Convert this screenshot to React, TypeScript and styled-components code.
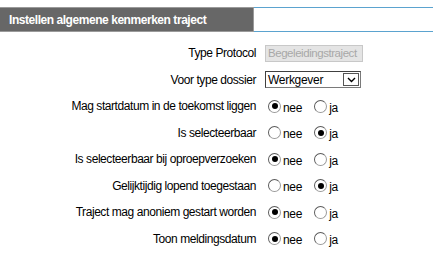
import React from 'react'
import styled, { createGlobalStyle } from 'styled-components'

const GlobalStyle = createGlobalStyle`
    body {
        margin: 0;
        background: #fff;
        font-family: "Liberation Sans", Arial, sans-serif;
        font-size: 12px;
        letter-spacing: -0.3px;
        color: #000;
    }
`

const Page = styled.div`
    padding-top: 7px;
`

const HeaderBar = styled.div`
    display: flex;
    height: 25px;
`

const HeaderTitle = styled.div`
    width: 254px;
    box-sizing: border-box;
    background: #676767;
    border: 1px solid #9a9a9a;
    border-left: none;
    color: #fff;
    font-weight: bold;
    font-size: 12px;
    letter-spacing: -0.45px;
    display: flex;
    align-items: center;
    padding-left: 9px;
`

const HeaderRest = styled.div`
    flex: 1;
    border-top: 1px solid #5ba3cf;
    border-bottom: 1px solid #5ba3cf;
`

const Form = styled.div`
    display: grid;
    grid-template-columns: 256px auto;
    column-gap: 9px;
    grid-auto-rows: 26.5px;
    align-items: center;
    margin-top: 8px;
`

const Label = styled.div`
    text-align: right;
    white-space: nowrap;
    letter-spacing: -0.43px;
`

const Field = styled.div`
    display: flex;
    align-items: center;
`

const ReadOnlyInput = styled.div`
    width: 98px;
    height: 17px;
    box-sizing: border-box;
    background: #e4e4e4;
    border: 1px solid #c8c8c8;
    color: #a8a8a8;
    padding-left: 2px;
    line-height: 15px;
    font-size: 11.5px;
    letter-spacing: -0.45px;
    white-space: nowrap;
    overflow: hidden;
`

const Select = styled.div`
    width: 96px;
    height: 17px;
    box-sizing: border-box;
    border: 1px solid #7a7a7a;
    border-top-color: #404040;
    border-left-color: #404040;
    display: flex;
    align-items: center;
    padding-left: 2px;
`

const SelectText = styled.span`
    flex: 1;
`

const SelectButton = styled.div`
    width: 16px;
    height: 13px;
    margin-right: 1px;
    border: 1px solid #555;
    box-sizing: border-box;
    display: flex;
    align-items: center;
    justify-content: center;
`

const RadioGroup = styled.div`
    display: flex;
    align-items: center;
`

const RadioOption = styled.label`
    display: flex;
    align-items: center;
    margin-right: 9px;
`

const RadioCircle = styled.span<{ $checked: boolean }>`
    width: 13px;
    height: 13px;
    box-sizing: border-box;
    border-radius: 50%;
    border: 1px solid #5a5a5a;
    border-right-color: #9a9a9a;
    border-bottom-color: #9a9a9a;
    background: #fff;
    margin: 0 2px 0 3px;
    display: flex;
    align-items: center;
    justify-content: center;
    &::after {
        content: '';
        display: ${p => (p.$checked ? 'block' : 'none')};
        width: 6px;
        height: 6px;
        border-radius: 50%;
        background: #000;
    }
`

const RadioText = styled.span`
    padding-top: 3px;
`

const questions: { label: string; value: 'nee' | 'ja' }[] = [
    { label: 'Mag startdatum in de toekomst liggen', value: 'nee' },
    { label: 'Is selecteerbaar', value: 'ja' },
    { label: 'Is selecteerbaar bij oproepverzoeken', value: 'nee' },
    { label: 'Gelijktijdig lopend toegestaan', value: 'ja' },
    { label: 'Traject mag anoniem gestart worden', value: 'nee' },
    { label: 'Toon meldingsdatum', value: 'nee' },
]

const App: React.FC = () => {
    return (
        <Page>
            <GlobalStyle />
            <HeaderBar>
                <HeaderTitle>Instellen algemene kenmerken traject</HeaderTitle>
                <HeaderRest />
            </HeaderBar>
            <Form>
                <Label>Type Protocol</Label>
                <Field>
                    <ReadOnlyInput>Begeleidingstraject</ReadOnlyInput>
                </Field>
                <Label>Voor type dossier</Label>
                <Field>
                    <Select>
                        <SelectText>Werkgever</SelectText>
                        <SelectButton>
                            <svg width="9" height="6" viewBox="0 0 9 6">
                                <path d="M1 1 L4.5 4.5 L8 1" fill="none" stroke="#000" strokeWidth="1.4" />
                            </svg>
                        </SelectButton>
                    </Select>
                </Field>
                {questions.map((q, index) => (
                    <React.Fragment key={index}>
                        <Label>{q.label}</Label>
                        <Field>
                            <RadioGroup>
                                {(['nee', 'ja'] as const).map(opt => (
                                    <RadioOption key={opt}>
                                        <RadioCircle $checked={q.value === opt} />
                                        <RadioText>{opt}</RadioText>
                                    </RadioOption>
                                ))}
                            </RadioGroup>
                        </Field>
                    </React.Fragment>
                ))}
            </Form>
        </Page>
    )
}

export default App
